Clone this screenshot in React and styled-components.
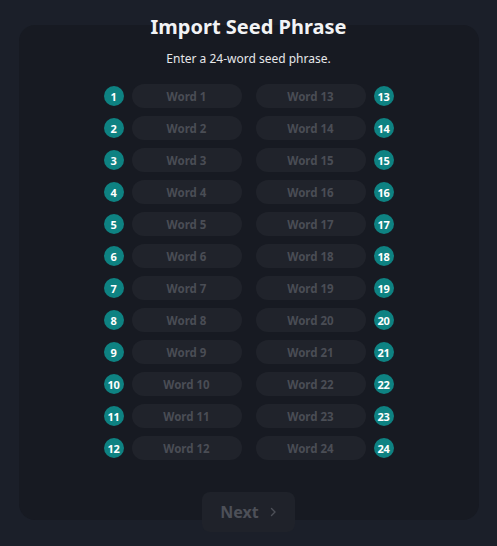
import React from "react"
import styled, { createGlobalStyle } from "styled-components"

const Global = createGlobalStyle`
  html, body {
    margin: 0;
    background: #1b1f29;
    font-family: "Noto Sans", "Open Sans", sans-serif;
  }
`

const Page = styled.div`
  min-height: 546px;
  padding-top: 14px;
  box-sizing: border-box;
  display: flex;
  flex-direction: column;
  align-items: center;
`

const Title = styled.h1`
  position: relative;
  z-index: 1;
  margin: 0 0 -14px;
  height: 25px;
  line-height: 25px;
  font-size: 20px;
  font-weight: 700;
  color: #f2f3f5;
`

const Card = styled.div`
  width: 460px;
  box-sizing: border-box;
  padding: 26px 0 60px;
  background: #171a22;
  border-radius: 16px;
  display: flex;
  flex-direction: column;
  align-items: center;
`

const Subtitle = styled.p`
  margin: 0 0 17px;
  font-size: 12px;
  line-height: 16px;
  color: #e6e7ea;
`

const Grid = styled.div`
  display: grid;
  grid-template-columns: auto auto;
  column-gap: 14px;
  row-gap: 8px;
  grid-auto-flow: column;
  grid-template-rows: repeat(12, 24px);
`

const Row = styled.label`
  display: flex;
  align-items: center;
  gap: 8px;
  flex-direction: ${p => (p.$right ? "row-reverse" : "row")};
`

const Badge = styled.span`
  width: 20px;
  height: 20px;
  border-radius: 50%;
  background: #0e8282;
  color: #fff;
  font-size: 11px;
  font-weight: 700;
  display: flex;
  align-items: center;
  justify-content: center;
  letter-spacing: -0.3px;
`

const WordInput = styled.input`
  width: 110px;
  height: 24px;
  box-sizing: border-box;
  border: none;
  outline: none;
  border-radius: 12px;
  background: #20232b;
  color: #d0d2d6;
  font-family: inherit;
  font-size: 11.5px;
  font-weight: 700;
  text-align: center;
  &::placeholder {
    color: #4a4d55;
  }
`

const NextButton = styled.button`
  margin-top: -28px;
  width: 93px;
  height: 40px;
  border: none;
  border-radius: 8px;
  background: #1f222a;
  color: #4d5058;
  font-family: inherit;
  font-size: 16px;
  font-weight: 700;
  display: flex;
  align-items: center;
  justify-content: center;
  gap: 10px;
  cursor: not-allowed;
`

const Chevron = () => (
  <svg width="8" height="10" viewBox="0 0 8 10" fill="none">
    <path d="M2.5 1.5 L6 5 L2.5 8.5" stroke="#4d5058" strokeWidth="1.4" strokeLinecap="round" strokeLinejoin="round" />
  </svg>
)

const words = Array.from({ length: 24 }, (_, i) => i + 1)

export default function App() {
  return (
    <Page>
      <Global />
      <Title>Import Seed Phrase</Title>
      <Card>
        <Subtitle>Enter a 24-word seed phrase.</Subtitle>
        <Grid>
          {words.map(n => (
            <Row key={n} $right={n > 12}>
              <Badge>{n}</Badge>
              <WordInput placeholder={`Word ${n}`} />
            </Row>
          ))}
        </Grid>
      </Card>
      <NextButton disabled>
        Next
        <Chevron />
      </NextButton>
    </Page>
  )
}
